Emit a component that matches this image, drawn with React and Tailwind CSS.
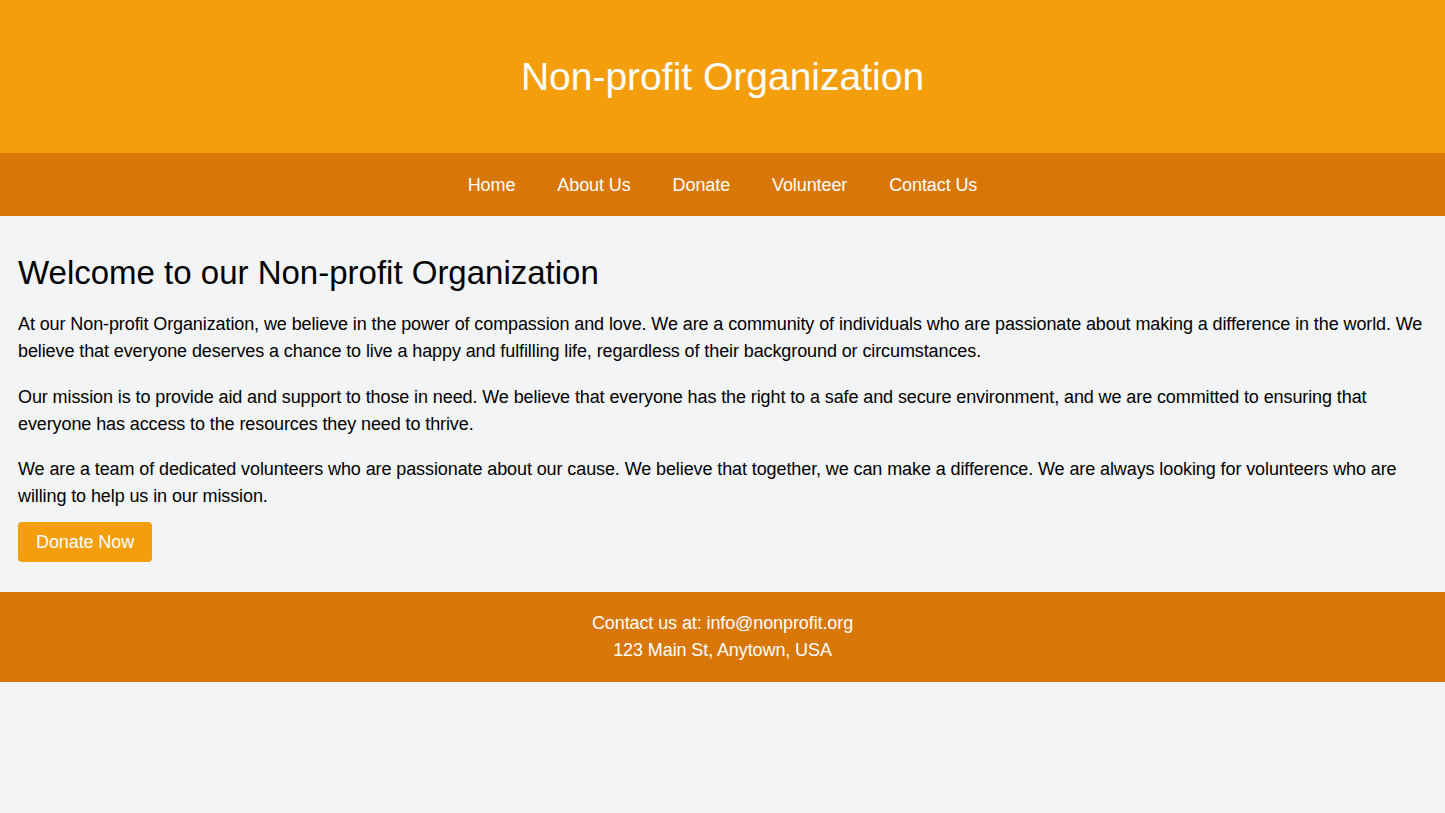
export default function App() {
  return (
    <div className="min-h-screen bg-[#f3f4f6] font-['Liberation_Sans',Arial,sans-serif] tracking-[-0.1px]">
      <header className="flex h-[153px] items-center justify-center bg-[#f59e0b]">
        <h1 className="text-[39px] leading-10 tracking-normal text-white">Non-profit Organization</h1>
      </header>
      <nav className="flex h-[63px] items-center bg-[#d97706]">
        <ul className="flex w-full justify-center">
          {["Home", "About Us", "Donate", "Volunteer", "Contact Us"].map((item) => (
            <li key={item}>
              <a href="#" className="block px-[21px] text-lg text-white">
                {item}
              </a>
            </li>
          ))}
        </ul>
      </nav>
      <main className="px-[18px] pt-[39px] pb-[30px]">
        <h2 className="mb-5 text-[33px] leading-9 tracking-normal text-black">Welcome to our Non-profit Organization</h2>
        <p className="mb-[19px] text-lg leading-[27px] text-black">
          At our Non-profit Organization, we believe in the power of compassion and love. We are a community of individuals who are passionate about making a difference in the world. We believe that everyone deserves a chance to live a happy and fulfilling life, regardless of their background or circumstances.
        </p>
        <p className="mb-[18px] text-lg leading-[27px] text-black">
          Our mission is to provide aid and support to those in need. We believe that everyone has the right to a safe and secure environment, and we are committed to ensuring that everyone has access to the resources they need to thrive.
        </p>
        <p className="mb-3 text-lg leading-[27px] text-black">
          We are a team of dedicated volunteers who are passionate about our cause. We believe that together, we can make a difference. We are always looking for volunteers who are willing to help us in our mission.
        </p>
        <button className="rounded bg-[#f59e0b] px-[18px] py-2 text-lg leading-6 text-white">Donate Now</button>
      </main>
      <footer className="bg-[#d97706] py-[18px] text-center text-lg leading-[27px] text-white">
        <p>Contact us at: info@nonprofit.org</p>
        <p>123 Main St, Anytown, USA</p>
      </footer>
    </div>
  );
}
